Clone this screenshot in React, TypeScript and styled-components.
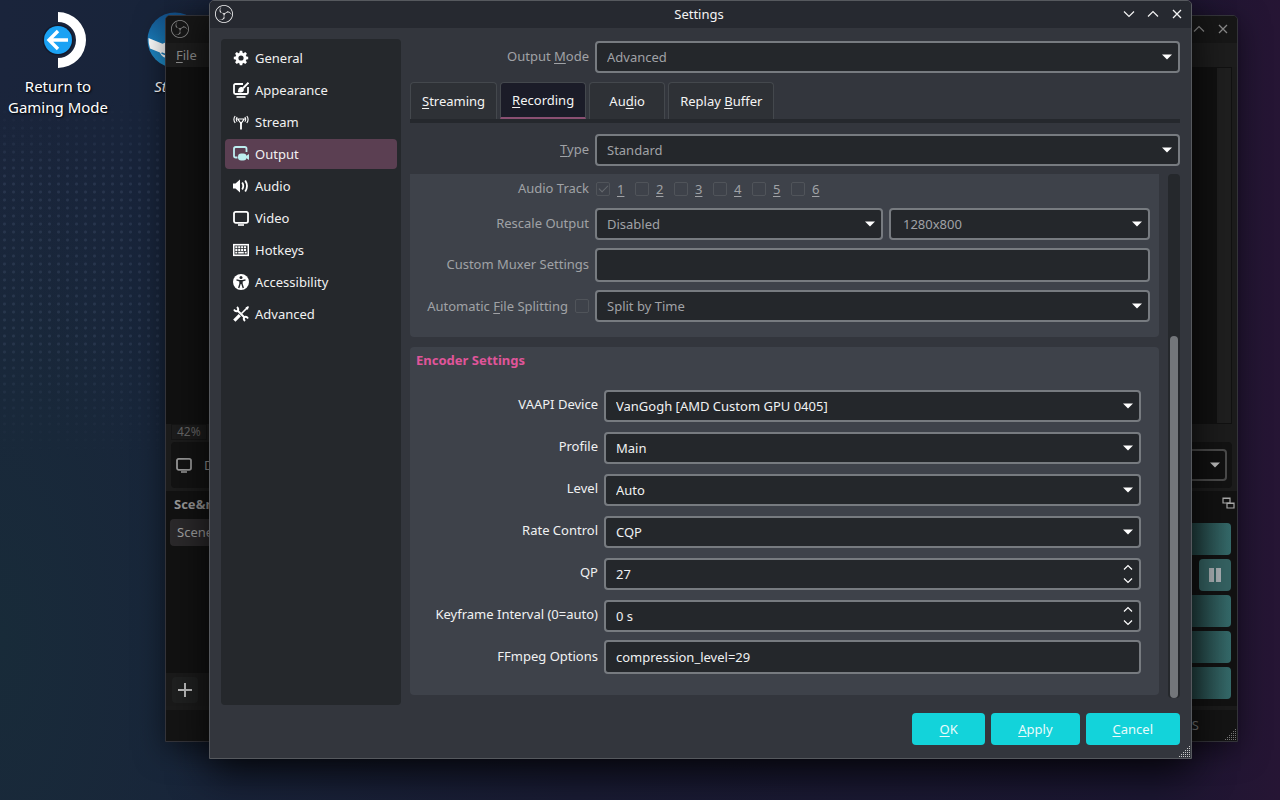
import React from "react";
import styled, { createGlobalStyle, css } from "styled-components";
import { SiObsstudio } from "react-icons/si";

const GlobalStyle = createGlobalStyle`
  * { box-sizing: border-box; }
  body { margin: 0; }
  body, button, input, select {
    font-family: "Noto Sans", "Liberation Sans", sans-serif;
    font-size: 13px;
    line-height: 18px;
  }
  u { text-underline-offset: 2px; text-decoration-skip-ink: none; }
`;

/* ---------- Desktop ---------- */

const Desktop = styled.div`
  position: relative;
  min-height: 100vh;
  overflow: hidden;
  background:
    radial-gradient(ellipse 240px 560px at 0 640px, #182b39, transparent),
    linear-gradient(90deg, #1a243b 0%, #18243a 12%, #191b33 45%, #1b1631 90%, #261534 100%);

  &::before {
    content: "";
    position: absolute;
    top: 100px;
    left: 0;
    width: 170px;
    height: 360px;
    background: radial-gradient(circle at center, rgba(130, 150, 190, 0.14) 1px, transparent 2px) 0 0 / 9px 8px;
    mask-image: linear-gradient(180deg, transparent, #000 20%, #000 65%, transparent);
  }
`;

const Launcher = styled.a<{ $left: number; $italic?: boolean }>`
  position: absolute;
  top: 12px;
  left: ${(p) => p.$left}px;
  width: 116px;
  display: flex;
  flex-direction: column;
  align-items: center;
  gap: 8px;
  color: #fff;
  font-size: 15px;
  line-height: 21px;
  text-align: center;
  text-decoration: none;
  text-shadow: 1px 1px 2px #000;
  font-style: ${(p) => (p.$italic ? "italic" : "normal")};
`;

/* ---------- Window frame ---------- */

const Frame = styled.section`
  position: absolute;
  display: flex;
  flex-direction: column;
  border: 1px solid #56595e;
  border-radius: 5px 5px 0 0;
`;

const TitleBar = styled.header<{ $dim?: boolean }>`
  display: grid;
  grid-template-columns: 1fr auto 1fr;
  align-items: center;
  height: 27px;
  padding: 0 8px 1px 5px;
  border-radius: 4px 4px 0 0;
  background: ${(p) => (p.$dim ? "#171717" : "#262930")};
  color: ${(p) => (p.$dim ? "#8a8a8a" : "#f4f4f4")};
`;

const WindowTitle = styled.h1`
  margin: 0;
  font-size: 13px;
  font-weight: 400;
`;

const WindowButtons = styled.div`
  display: flex;
  justify-content: flex-end;
  gap: 12px;
`;

const WindowButton = styled.button`
  display: flex;
  padding: 0;
  border: 0;
  background: none;
  color: inherit;
`;

const Grip = styled.svg`
  position: absolute;
  right: 0;
  bottom: 0;
`;

/* ---------- Recorder window behind the dialog ---------- */

const RecorderFrame = styled(Frame)`
  top: 15px;
  left: 165px;
  right: 42px;
  border-color: #34343a;
  background: #1c1c1c;
  color: #999;
  box-shadow: 0 8px 30px rgba(0, 0, 0, 0.5);
`;

const MenuBar = styled.nav`
  display: flex;
  height: 24px;
  align-items: center;
  padding: 0 10px;
  background: #1d1d1d;
`;

const MenuButton = styled.button`
  padding: 0;
  border: 0;
  background: none;
  color: #8c8c8c;
`;

const Preview = styled.div`
  height: 357px;
  margin: 0 5px 0 0;
  border: 1px solid #111;
  border-width: 1px 1px 1px 0;
  background: linear-gradient(#111, #111) left / calc(100% - 14px) 100% no-repeat #1f1f1f;
`;

const ZoomRow = styled.div`
  display: flex;
  align-items: center;
  height: 16px;
  padding: 0 5px;
  color: #666;
  font-size: 12px;
`;

const ZoomBox = styled.span`
  width: 36px;
  padding: 0 5px;
  border: 1px solid #151515;
  line-height: 14px;
`;

const SourceBar = styled.div`
  display: flex;
  align-items: center;
  justify-content: space-between;
  height: 46px;
  margin: 2px 5px 3px;
  padding: 0 5px;
  border-radius: 4px;
  background: #131313;
`;

const SourceName = styled.span`
  display: flex;
  align-items: center;
  gap: 12px;
`;

const DimSelect = styled.span`
  display: flex;
  align-items: center;
  justify-content: flex-end;
  width: 120px;
  height: 32px;
  padding-right: 5px;
  border: 2px solid #4b4b4b;
  border-radius: 4px;
  background: #111;
  color: #bbb;
`;

const Docks = styled.div`
  display: flex;
  justify-content: space-between;
  height: 215px;
  background: #121212;
`;

const SceneDock = styled.div`
  display: flex;
  flex-direction: column;
  width: 120px;
`;

const DockTitle = styled.h2`
  margin: 4px 8px 6px;
  font-size: 13px;
  font-weight: 700;
  line-height: 18px;
`;

const SceneItem = styled.div`
  flex: none;
  height: 27px;
  margin: 0 4px;
  padding: 4px 7px;
  border-radius: 4px;
  background: #2b292b;
  color: #a2a2a2;
`;

const DockTools = styled.div`
  display: flex;
  align-items: center;
  gap: 8px;
  height: 33px;
  margin-top: auto;
  padding: 0 6px;
  background: #1a1a1a;
`;

const AddButton = styled.button`
  display: flex;
  padding: 5px;
  border: 0;
  border-radius: 4px;
  background: #1f2020;
  color: #bbb;
`;

const ControlDock = styled.div`
  display: flex;
  flex-direction: column;
  align-items: flex-end;
  gap: 9px;
  width: 120px;
  padding: 5px 2px 0 0;
`;

const ControlList = styled.div`
  display: flex;
  flex-direction: column;
  align-items: flex-end;
  gap: 4px;
  width: 100%;
  padding: 4px 4px 0 0;
`;

const ControlButton = styled.button<{ $square?: boolean }>`
  display: flex;
  align-items: center;
  justify-content: center;
  flex: none;
  width: ${(p) => (p.$square ? "32px" : "100%")};
  height: 32px;
  padding: 0;
  border: 0;
  border-radius: 4px;
  background: ${(p) => (p.$square ? "#356262" : "linear-gradient(90deg, #203c3c 60%, #356a6a)")};
  color: #a9b0b4;
`;

const StatusBar = styled.footer`
  display: flex;
  align-items: center;
  justify-content: flex-end;
  height: 35px;
  padding: 0 38px 2px;
  border-top: 4px solid #1b1b1b;
  background: #141414;
  color: #777;
`;

/* ---------- Settings dialog ---------- */

const SettingsFrame = styled(Frame)`
  top: 0;
  left: 209px;
  right: 88px;
  background: #33363d;
  color: #f0f1f2;
  box-shadow: 0 12px 40px rgba(0, 0, 0, 0.8);
`;

const Body = styled.div`
  display: flex;
  gap: 9px;
  padding: 11px 11px 0;
`;

const Sidebar = styled.nav`
  display: flex;
  flex-direction: column;
  flex: none;
  gap: 2px;
  width: 180px;
  padding: 4px;
  border-radius: 4px;
  background: #25282c;
`;

const SidebarItem = styled.button<{ $active?: boolean }>`
  display: flex;
  align-items: center;
  gap: 6px;
  height: 30px;
  padding: 0 8px;
  border: 0;
  border-radius: 4px;
  background: ${(p) => (p.$active ? "#5b3f52" : "transparent")};
  color: #f1f1f1;

  svg { color: ${(p) => (p.$active ? "#bdeef0" : "#fff")}; }
`;

const Main = styled.main`
  display: flex;
  flex-direction: column;
  flex: 1;
  min-width: 0;
  padding: 2px 0 7px;
`;

const Row = styled.div<{ $label?: number; $tall?: boolean; $dim?: boolean }>`
  display: grid;
  grid-template-columns: ${(p) => p.$label ?? 179}px minmax(0, 1fr);
  column-gap: 6px;
  align-items: ${(p) => (p.$tall ? "end" : "center")};
  min-height: ${(p) => (p.$tall ? 34 : 22)}px;
  color: ${(p) => (p.$dim ? "#a0a2a6" : "#f0f1f2")};
`;

const Label = styled.label`
  align-self: center;
  padding-bottom: 2px;
  text-align: right;
`;

const CheckLabel = styled.label`
  display: flex;
  align-items: center;
  justify-content: flex-end;
  gap: 7px;
`;

const fieldBox = css`
  width: 100%;
  border: 2px solid #777b80;
  border-radius: 4px;
  background: #24272b;
  color: inherit;
  opacity: 1;
`;

const SelectBox = styled.span`
  display: grid;
  align-items: center;
  min-width: 0;

  > * { grid-area: 1 / 1; }
  > svg { justify-self: end; margin-right: 8px; color: #fff; pointer-events: none; }
`;

const NativeSelect = styled.select<{ $inset?: number }>`
  ${fieldBox}
  height: 32px;
  padding: 0 24px 0 ${(p) => p.$inset ?? 10}px;
  appearance: none;
`;

const TextInput = styled.input`
  ${fieldBox}
  height: 34px;
  padding: 0 10px;
`;

const SpinBox = styled.span`
  ${fieldBox}
  display: flex;
  height: 32px;
  overflow: hidden;
`;

const SpinInput = styled.input`
  flex: 1;
  min-width: 0;
  padding: 0 10px;
  border: 0;
  background: none;
  color: inherit;
`;

const SpinButtons = styled.span`
  display: flex;
  flex-direction: column;
  justify-content: center;
  gap: 4px;
  padding-right: 6px;
`;

const SpinButton = styled.button`
  display: flex;
  padding: 0;
  border: 0;
  background: none;
  color: #fff;
`;

const TabList = styled.div`
  display: flex;
  gap: 3px;
  margin: 9px 0 11px;
  border-bottom: 4px solid #25282d;
`;

const Tab = styled.button<{ $active?: boolean }>`
  height: 37px;
  min-width: 76px;
  padding: 0 11px;
  border: 1px solid #44484d;
  border-bottom: ${(p) => (p.$active ? "2px solid #8a4f72" : "0")};
  border-radius: 4px 4px 0 0;
  background: ${(p) => (p.$active ? "#1b1c28" : "#2e3136")};
  color: #f4f4f4;
`;

const ScrollArea = styled.div`
  display: flex;
  gap: 9px;
  margin-top: 8px;
`;

const Groups = styled.div`
  display: flex;
  flex-direction: column;
  flex: 1;
  gap: 10px;
  min-width: 0;
  padding-bottom: 3px;
`;

const Group = styled.fieldset<{ $kind: "recording" | "encoder" }>`
  display: flex;
  flex-direction: column;
  gap: 8px;
  min-width: 0;
  margin: 0;
  border: 0;
  background: #3e424a;
  ${(p) =>
    p.$kind === "recording"
      ? css`padding: 4px 9px 15px 0; border-radius: 0 0 4px 4px;`
      : css`padding: 4px 18px 21px 0; border-radius: 4px;`}
`;

const GroupTitle = styled.h2`
  margin: 0 0 11px 6px;
  color: #e0559a;
  font-size: 13px;
  font-weight: 700;
  line-height: 18px;
`;

const ScrollTrack = styled.div`
  display: flex;
  align-items: flex-end;
  width: 12px;
  padding: 0 2px;
  border-radius: 4px;
  background: #25282c;
`;

const ScrollThumb = styled.div`
  width: 8px;
  height: 69%;
  border-radius: 4px;
  background: #73767a;
`;

const Tracks = styled.div`
  display: flex;
  padding-left: 1px;
`;

const Track = styled.label`
  display: flex;
  align-items: center;
  gap: 7px;
  width: 39px;
`;

const Check = styled.input`
  flex: none;
  width: 14px;
  height: 14px;
  margin: 0;
  border: 1px solid #50545a;
  border-radius: 2px;
  appearance: none;
  background: transparent;

  &:checked::after {
    content: "";
    display: block;
    width: 8px;
    height: 4px;
    margin: 2px;
    border: solid #666a6f;
    border-width: 0 0 1px 1px;
    transform: rotate(-45deg);
  }
`;

const Split = styled.div`
  display: grid;
  grid-template-columns: 288fr 261fr;
  gap: 6px;
`;

const Footer = styled.footer`
  display: flex;
  justify-content: flex-end;
  gap: 6px;
  padding: 8px 11px 13px;
`;

const ActionButton = styled.button`
  height: 32px;
  min-width: 73px;
  padding: 0 27px;
  border: 0;
  border-radius: 4px;
  background: #13d3da;
  color: #e9fbfc;
`;

/* ---------- Icons ---------- */

const Arrow = () => (
  <svg width="10" height="6" viewBox="0 0 10 6" aria-hidden="true">
    <path d="M0 0.5h10L5 5.5z" fill="currentColor" />
  </svg>
);

const Chevron = ({ up, small }: { up?: boolean; small?: boolean }) => (
  <svg width={small ? 10 : 12} height={small ? 9 : 12} viewBox={small ? "1 1.5 10 9" : "0 0 12 12"} fill="none" stroke="currentColor" strokeWidth="1.2">
    <path d={up ? (small ? "M2 8l4-4 4 4" : "M1 8.500l5-5 5 5") : small ? "M2 4l4 4 4-4" : "M1 3.500l5 5 5-5"} />
  </svg>
);

const Close = () => (
  <svg width="12" height="12" viewBox="0 0 12 12" stroke="currentColor" strokeWidth="1.3">
    <path d="M2 2l8 8M10 2l-8 8" />
  </svg>
);

const gripDots: [number, number][] = [];
for (let r = 0; r < 6; r++) for (let c = 5 - r; c < 6; c++) gripDots.push([c * 2, r * 2]);

const ResizeGrip = ({ color }: { color: string }) => (
  <Grip width="12" height="12" viewBox="0 0 12 12" fill={color} shapeRendering="crispEdges">
    {gripDots.map(([x, y]) => (
      <rect key={`${x}-${y}`} x={x} y={y} width="1" height="1" />
    ))}
  </Grip>
);

const Icon = ({ children }: { children: React.ReactNode }) => (
  <svg width="16" height="16" viewBox="0 0 16 16" fill="none" stroke="currentColor" strokeWidth="1.6" aria-hidden="true">
    {children}
  </svg>
);

const GearIcon = () => (
  <Icon>
    <circle cx="8" cy="8" r="4.100" strokeWidth="3" />
    {[0, 45, 90, 135, 180, 225, 270, 315].map((a) => (
      <path key={a} d="M6.400 3L6.800.8h2.400l.4 2.200z" fill="currentColor" stroke="none" transform={`rotate(${a} 8 8)`} />
    ))}
  </Icon>
);

const AppearanceIcon = () => (
  <Icon>
    <path d="M10 2H2.500Q1 2 1 3.500v7Q1 12 2.500 12h11q1.500 0 1.500-1.500V5" strokeWidth="1.800" />
    <path d="M3.500 15h9" />
    <path d="M15.500.7L10 6.200" strokeWidth="2" />
    <path d="M4.700 10c.6-1 .2-2.900 1.400-4.100 1.300-1.300 3.400-1 4.300.3 1 1.600.3 3.600-1.600 4.100-1.400.4-3.200.2-4.100-.3z" fill="currentColor" stroke="none" />
  </Icon>
);

const StreamIcon = () => (
  <Icon>
    <path d="M4.800 5h6.400L8 9.500z" strokeWidth="1.200" />
    <path d="M8 8v7.500" strokeWidth="1.800" />
    <path d="M2.200 2Q-.4 5.300 2.200 9M4.200 3.200Q2.400 5.300 4.200 7.700M13.800 2q2.600 3.300 0 7M11.800 3.200q1.800 2.100 0 4.500" strokeWidth="1.100" />
  </Icon>
);

const OutputIcon = () => (
  <Icon>
    <path d="M4.500 11.500H2.800Q1 11.500 1 9.700V2.800Q1 1 2.800 1h8.900Q13.500 1 13.500 2.800V6" strokeWidth="1.800" />
    <rect x="5" y="7.500" width="8.500" height="7" rx="3.200" fill="currentColor" stroke="none" />
    <path d="M11.500 11L16 8v6z" fill="currentColor" stroke="none" />
  </Icon>
);

const AudioIcon = () => (
  <Icon>
    <path d="M0 5.500h2.500L7 1.500v13l-4.500-4H0z" fill="currentColor" stroke="none" />
    <path d="M9.200 4.600q2.200 3.400 0 6.800" strokeWidth="1.800" />
    <path d="M12.200 2.500q3.600 5.500 0 11" strokeWidth="1.800" />
  </Icon>
);

const MonitorIcon = () => (
  <Icon>
    <rect x="1" y="1.800" width="14" height="11" rx="1.800" strokeWidth="1.800" />
    <path d="M5 15h6" />
  </Icon>
);

const KeyboardIcon = () => (
  <Icon>
    <rect x="0.700" y="2.700" width="14.600" height="10.600" strokeWidth="1.600" />
    <path d="M2.300 5.300h11.400M2.300 8h11.400" strokeWidth="1.900" strokeDasharray="2.100 .8" />
    <path d="M2.300 10.700h2M5.200 10.700h5.600M11.700 10.700h2" strokeWidth="1.700" />
  </Icon>
);

const AccessibilityIcon = () => (
  <Icon>
    <circle cx="8" cy="8" r="8" fill="currentColor" stroke="none" />
    <circle cx="8" cy="3.400" r="1.500" fill="#25282c" stroke="none" />
    <path d="M3.500 5.900l3 .8h3l3-.8M8 6.500v3.500M7 6.500v3.500l-1.300 4M9 6.500v3.500l1.300 4" stroke="#25282c" strokeWidth="1.400" />
  </Icon>
);

const ToolsIcon = () => (
  <Icon>
    <path d="M4 4l8 8" strokeWidth="2" />
    <path d="M1 3.500Q2.500 6 4.800 4.800 6 2.800 4 1M15 12.500q-1.500-2.500-3.800-1.300-1.200 2 .8 3.800" strokeWidth="1.900" />
    <path d="M15.500.5L8.500 7.500" strokeWidth="1.600" />
    <path d="M6.800 9.200L1.300 14.700" strokeWidth="3.200" />
    <path d="M13 1.200l2 2" strokeWidth="1.400" />
  </Icon>
);

const ReturnIcon = () => (
  <svg width="56" height="56" viewBox="0 0 56 56" aria-hidden="true">
    <path d="M28 0a28 28 0 0 1 0 56V46a18 18 0 0 0 0-36z" fill="#fff" />
    <circle cx="28" cy="28" r="15.500" fill="#141a2c" />
    <circle cx="28" cy="28" r="14" fill="#1ba2f4" />
    <path d="M38 28H20.500M28 19l-9 9 9 9" fill="none" stroke="#fff" strokeWidth="3.400" />
  </svg>
);

const SteamIcon = () => (
  <svg width="56" height="56" viewBox="0 0 56 56" aria-hidden="true">
    <defs>
      <linearGradient id="steam-disc" x1="0" y1="0" x2="0" y2="1">
        <stop offset="0" stopColor="#14528c" />
        <stop offset="0.5" stopColor="#1a7cba" />
        <stop offset="1" stopColor="#2290cc" />
      </linearGradient>
    </defs>
    <circle cx="28" cy="28" r="27.500" fill="url(#steam-disc)" />
    <path d="M1.500 26l14 5.800q2.500-1.600 5.300-1.400L28 20a10.500 10.500 0 1 1 10.700 10.500L28.500 38a8 8 0 0 1-15.600 2.600L3 36.500Q1.200 31 1.500 26z" fill="#fff" />
    <circle cx="38.500" cy="20" r="7" fill="none" stroke="#1a7cba" strokeWidth="2" />
    <path d="M14.500 41l3.200 1.300a4.800 4.800 0 1 0 2-9.200" fill="none" stroke="#1a7cba" strokeWidth="1.500" />
  </svg>
);

/* ---------- Content ---------- */

const pages = [
  { name: "General", icon: <GearIcon /> },
  { name: "Appearance", icon: <AppearanceIcon /> },
  { name: "Stream", icon: <StreamIcon /> },
  { name: "Output", icon: <OutputIcon /> },
  { name: "Audio", icon: <AudioIcon /> },
  { name: "Video", icon: <MonitorIcon /> },
  { name: "Hotkeys", icon: <KeyboardIcon /> },
  { name: "Accessibility", icon: <AccessibilityIcon /> },
  { name: "Advanced", icon: <ToolsIcon /> },
];

const tabs = [
  { key: "streaming", label: <><u>S</u>treaming</> },
  { key: "recording", label: <><u>R</u>ecording</> },
  { key: "audio", label: <>Au<u>d</u>io</> },
  { key: "replay", label: <>Replay <u>B</u>uffer</> },
];

type SelectProps = { id?: string; value: string; disabled?: boolean; inset?: number; name?: string };

const Select = ({ id, value, disabled, inset, name }: SelectProps) => (
  <SelectBox>
    <NativeSelect id={id} aria-label={name} disabled={disabled} $inset={inset} defaultValue={value}>
      <option>{value}</option>
    </NativeSelect>
    <Arrow />
  </SelectBox>
);

const Spin = ({ id, value }: { id: string; value: string }) => (
  <SpinBox>
    <SpinInput id={id} role="spinbutton" defaultValue={value} />
    <SpinButtons>
      <SpinButton aria-label="Increase"><Chevron up small /></SpinButton>
      <SpinButton aria-label="Decrease"><Chevron small /></SpinButton>
    </SpinButtons>
  </SpinBox>
);

const encoderSelects = [
  { id: "device", label: "VAAPI Device", value: "VanGogh [AMD Custom GPU 0405]" },
  { id: "profile", label: "Profile", value: "Main" },
  { id: "level", label: "Level", value: "Auto" },
  { id: "rate", label: "Rate Control", value: "CQP" },
];

const encoderSpins = [
  { id: "qp", label: "QP", value: "27" },
  { id: "keyframe", label: "Keyframe Interval (0=auto)", value: "0 s" },
];

const RecorderWindow = () => (
  <RecorderFrame>
    <TitleBar $dim>
      <SiObsstudio size={18} />
      <span />
      <WindowButtons>
        <WindowButton aria-label="Maximize recorder"><Chevron up /></WindowButton>
        <WindowButton aria-label="Close recorder"><Close /></WindowButton>
      </WindowButtons>
    </TitleBar>
    <MenuBar>
      <MenuButton><u>F</u>ile</MenuButton>
    </MenuBar>
    <Preview />
    <ZoomRow><ZoomBox>42%</ZoomBox></ZoomRow>
    <SourceBar>
      <SourceName><MonitorIcon /> D</SourceName>
      <DimSelect><Arrow /></DimSelect>
    </SourceBar>
    <Docks>
      <SceneDock>
        <DockTitle>Sce&amp;nes</DockTitle>
        <SceneItem>Scene</SceneItem>
        <DockTools>
          <AddButton aria-label="Add scene">
            <svg width="16" height="16" viewBox="0 0 16 16" stroke="currentColor" strokeWidth="2">
              <path d="M8 1v14M1 8h14" />
            </svg>
          </AddButton>
        </DockTools>
      </SceneDock>
      <ControlDock>
        <svg width="13" height="14" viewBox="0 0 13 14" fill="none" stroke="#aaa" strokeWidth="1.200">
          <path d="M1 2h7v5H1zM1 2.500h7" />
          <path d="M5 7h7v5H5zM5 7.500h7" fill="#121212" />
        </svg>
        <ControlList>
          <ControlButton aria-label="Start streaming" />
          <ControlButton $square aria-label="Pause recording">
            <svg width="12" height="14" viewBox="0 0 12 14" fill="currentColor">
              <path d="M0 0h5v14H0zM7 0h5v14H7z" />
            </svg>
          </ControlButton>
          <ControlButton aria-label="Virtual camera" />
          <ControlButton aria-label="Studio mode" />
          <ControlButton aria-label="Open settings" />
        </ControlList>
      </ControlDock>
    </Docks>
    <StatusBar>FPS</StatusBar>
    <ResizeGrip color="#777" />
  </RecorderFrame>
);

const SettingsWindow = () => (
  <SettingsFrame>
    <TitleBar>
      <SiObsstudio size={18} />
      <WindowTitle>Settings</WindowTitle>
      <WindowButtons>
        <WindowButton aria-label="Minimize"><Chevron /></WindowButton>
        <WindowButton aria-label="Maximize"><Chevron up /></WindowButton>
        <WindowButton aria-label="Close"><Close /></WindowButton>
      </WindowButtons>
    </TitleBar>
    <Body>
      <Sidebar>
        {pages.map((p) => (
          <SidebarItem key={p.name} $active={p.name === "Output"}>
            {p.icon}
            {p.name}
          </SidebarItem>
        ))}
      </Sidebar>
      <Main>
        <Row $dim>
          <Label htmlFor="mode">Output <u>M</u>ode</Label>
          <Select id="mode" value="Advanced" disabled />
        </Row>
        <TabList role="tablist">
          {tabs.map((t) => (
            <Tab key={t.key} role="tab" aria-selected={t.key === "recording"} $active={t.key === "recording"}>
              {t.label}
            </Tab>
          ))}
        </TabList>
        <Row $dim>
          <Label htmlFor="type"><u>T</u>ype</Label>
          <Select id="type" value="Standard" disabled />
        </Row>
        <ScrollArea>
          <Groups>
            <Group $kind="recording">
              <Row $dim>
                <Label as="span">Audio Track</Label>
                <Tracks>
                  {[1, 2, 3, 4, 5, 6].map((n) => (
                    <Track key={n}>
                      <Check type="checkbox" disabled defaultChecked={n === 1} />
                      <u>{n}</u>
                    </Track>
                  ))}
                </Tracks>
              </Row>
              <Row $dim>
                <Label htmlFor="rescale">Rescale Output</Label>
                <Split>
                  <Select id="rescale" value="Disabled" disabled />
                  <Select name="Rescale resolution" value="1280x800" disabled inset={12} />
                </Split>
              </Row>
              <Row $dim>
                <Label htmlFor="muxer">Custom Muxer Settings</Label>
                <TextInput id="muxer" disabled />
              </Row>
              <Row $dim>
                <CheckLabel>
                  <span>Automatic <u>F</u>ile Splitting</span>
                  <Check type="checkbox" disabled />
                </CheckLabel>
                <Select name="Split mode" value="Split by Time" disabled />
              </Row>
            </Group>
            <Group $kind="encoder">
              <GroupTitle>Encoder Settings</GroupTitle>
              {encoderSelects.map((f) => (
                <Row key={f.id} $label={188} $tall>
                  <Label htmlFor={f.id}>{f.label}</Label>
                  <Select id={f.id} value={f.value} />
                </Row>
              ))}
              {encoderSpins.map((f) => (
                <Row key={f.id} $label={188} $tall>
                  <Label htmlFor={f.id}>{f.label}</Label>
                  <Spin id={f.id} value={f.value} />
                </Row>
              ))}
              <Row $label={188} $tall>
                <Label htmlFor="ffmpeg">FFmpeg Options</Label>
                <TextInput id="ffmpeg" defaultValue="compression_level=29" />
              </Row>
            </Group>
          </Groups>
          <ScrollTrack>
            <ScrollThumb />
          </ScrollTrack>
        </ScrollArea>
      </Main>
    </Body>
    <Footer>
      <ActionButton><u>O</u>K</ActionButton>
      <ActionButton><u>A</u>pply</ActionButton>
      <ActionButton><u>C</u>ancel</ActionButton>
    </Footer>
    <ResizeGrip color="#c8c8c8" />
  </SettingsFrame>
);

export default function App() {
  return (
    <>
      <GlobalStyle />
      <Desktop>
        <Launcher href="#gaming" $left={0}>
          <ReturnIcon />
          <span>Return to Gaming Mode</span>
        </Launcher>
        <Launcher href="#steam" $left={117} $italic>
          <SteamIcon />
          <span>Steam</span>
        </Launcher>
        <RecorderWindow />
        <SettingsWindow />
      </Desktop>
    </>
  );
}
